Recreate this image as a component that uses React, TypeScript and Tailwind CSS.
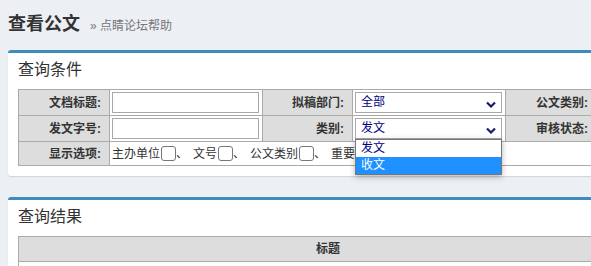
import React from "react";

const FONT = '"Liberation Sans", "Noto Sans CJK SC", sans-serif';

function Chevron() {
  return (
    <svg width="10" height="7" viewBox="0 0 10 7" className="absolute right-[5px] top-[8px]">
      <polyline points="1,1.5 5,5.5 9,1.5" fill="none" stroke="#1a1a6e" strokeWidth="2.2" strokeLinejoin="miter" />
    </svg>
  );
}

function Select({ value }: { value: string }) {
  return (
    <div className="relative ml-[2px] w-[147px] h-[21px] border border-[#a9a9a9] bg-white pl-[5px] text-[12px] leading-[19px] text-[#000080]">
      {value}
      <Chevron />
    </div>
  );
}

function Input() {
  return <div className="ml-[2px] w-[147px] h-[21px] border border-[#a9a9a9] bg-white" />;
}

function Label({ children }: { children: React.ReactNode }) {
  return (
    <div className="bg-[#dddddd] border-r border-b border-[#aaaaaa] flex items-center justify-end pr-[8px] text-[12px] font-bold text-[#333]">
      {children}
    </div>
  );
}

function Cell({ children, className = "" }: { children?: React.ReactNode; className?: string }) {
  return <div className={"bg-white border-r border-b border-[#aaaaaa] flex items-center " + className}>{children}</div>;
}

function Check() {
  return <span className="inline-block w-[15px] h-[15px] rounded-[3px] border border-[#767676] bg-white ml-[1px]" />;
}

export default function App() {
  const items = ["主办单位", "文号", "公文类别", "重要程度"];
  return (
    <div className="relative w-[591px] h-[266px] overflow-hidden bg-[#ecf0f5]" style={{ fontFamily: FONT }}>
      <div className="w-[656px]">
        <div className="h-[50px] pl-[8px] pt-[12px] flex items-baseline">
          <span className="text-[18px] leading-[24px] font-bold text-[#333]">查看公文</span>
          <span className="ml-[10px] text-[12px] leading-[16px] text-[#777]">» 点睛论坛帮助</span>
        </div>
        <div className="px-[8px]">
          <div className="rounded-[3px] border-t-[3px] border-[#3c8dbc] bg-white shadow-[0_1px_1px_rgba(0,0,0,0.12)] px-[10px] pb-[10px]">
            <div className="pt-[7px] mb-[9px] text-[16px] leading-[20px] text-[#333]">查询条件</div>
            <div className="grid grid-cols-[91px_153px_90px_153px_91px_42px] grid-rows-[26px_26px_24px] border-l border-t border-[#aaaaaa]">
              <Label>文档标题:</Label>
              <Cell><Input /></Cell>
              <Label>拟稿部门:</Label>
              <Cell><Select value="全部" /></Cell>
              <Label>公文类别:</Label>
              <Cell />
              <Label>发文字号:</Label>
              <Cell><Input /></Cell>
              <Label>类别:</Label>
              <Cell className="relative">
                <Select value="发文" />
                <div className="absolute z-10 left-[2px] top-[23px] w-[147px] border border-[#767676] bg-white shadow-[0_2px_6px_rgba(0,0,0,0.3)] text-[12px]">
                  <div className="h-[17px] leading-[17px] pl-[5px] text-[#000080]">发文</div>
                  <div className="h-[17px] leading-[17px] pl-[5px] bg-[#1e90ff] text-white">收文</div>
                </div>
              </Cell>
              <Label>审核状态:</Label>
              <Cell />
              <Label>显示选项:</Label>
              <Cell className="col-span-5 pl-[2px] text-[12px] text-[#333]">
                {items.map((t, i) => (
                  <span key={t} className="flex items-center">
                    <span>{t}</span>
                    <Check />
                    {i < items.length - 1 && <span className="w-[12px] mr-[5px]">、</span>}
                  </span>
                ))}
              </Cell>
            </div>
          </div>
          <div className="mt-[21px] rounded-[3px] border-t-[3px] border-[#3c8dbc] bg-white shadow-[0_1px_1px_rgba(0,0,0,0.12)] px-[10px] pb-[10px] h-[120px]">
            <div className="pt-[7px] mb-[9px] text-[16px] leading-[20px] text-[#333]">查询结果</div>
            <div className="border-l border-t border-[#aaaaaa]">
              <div className="h-[25px] bg-[#dddddd] border-r border-b border-[#aaaaaa] flex items-center justify-center text-[12px] font-bold text-[#333]">标题</div>
              <div className="h-[25px] bg-white border-r border-b border-[#aaaaaa]" />
            </div>
          </div>
        </div>
      </div>
    </div>
  );
}
